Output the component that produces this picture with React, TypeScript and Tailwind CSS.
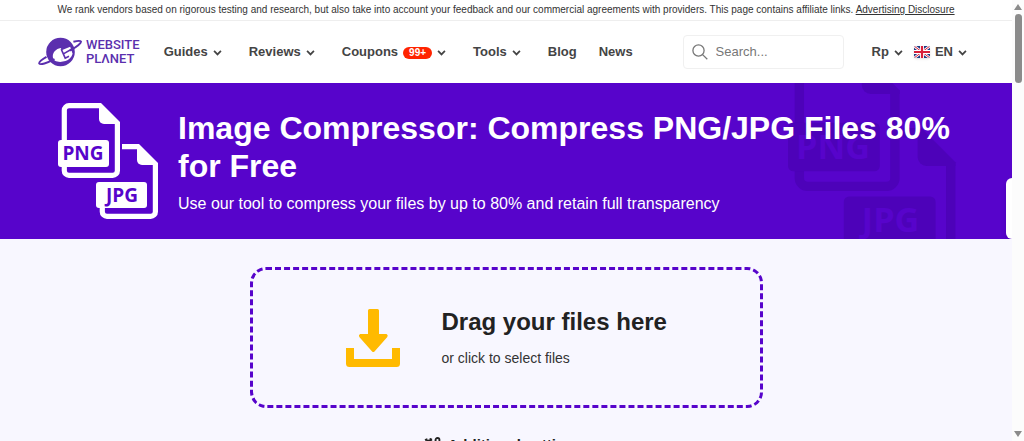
import { ReactNode } from "react";

function Caret() {
  return (
    <svg viewBox="0 0 10 7" className="w-[9px] h-1.5 mt-0.5 shrink-0" fill="none" stroke="currentColor" strokeWidth="2">
      <path d="M1 1 5 5.2 9 1" />
    </svg>
  );
}

function PlanetLogo() {
  return (
    <a href="#" aria-label="Website Planet" className="flex items-center gap-1 text-[#5b2fae] shrink-0">
      <svg viewBox="0 0 44 31" className="w-11 h-8" fill="none">
        <circle cx="22.5" cy="15.5" r="14.3" fill="currentColor" />
        <path d="M14.8 20c0-4.2 3.3-7.6 7.8-8.4l1.6 2 8-3.4 2.4 7c-1 3.4-3.6 6.2-7.2 7.4-5.4 1.7-12.6 1-12.6-4.6z" fill="#fff" />
        <path d="M23.2 12.6 27.2 21.6l3.8-1.9M25.4 17.4l9.4-5.4" stroke="currentColor" strokeWidth="1.6" />
        <path
          d="M8.5 20.3C3.6 23.2.7 25.8 1.3 27c.8 1.5 7.8-.3 15.2-4.3M35.4 5.2c4.1-1 7-1.2 7.5-.2.7 1.5-4.2 5.4-10.9 9.1"
          stroke="currentColor"
          strokeWidth="2"
        />
      </svg>
      <span className="font-[Roboto,sans-serif] text-[13px] leading-[14px] font-medium">
        WEBSITE
        <br />
        PLΛNET
      </span>
    </a>
  );
}

// jpgX / jpgY nudge the front document relative to the back one
function FilesIcon({ className, cut, jpgX = 0, jpgY = 0 }: { className: string; cut: string; jpgX?: number; jpgY?: number }) {
  const label = { fontFamily: "'Open Sans', sans-serif", fontWeight: 700, fontSize: 19 };
  return (
    <svg viewBox="0 0 100 116" className={className} aria-hidden="true">
      <path
        d="M43 2.6H11a4.7 4.7 0 0 0-4.7 4.7v60.4a4.7 4.7 0 0 0 4.7 4.7h43.7a4.7 4.7 0 0 0 4.7-4.7V19"
        fill="none"
        stroke="currentColor"
        strokeWidth="5.2"
      />
      <path d="M41 0h2l19 19v2H46a5 5 0 0 1-5-5z" fill="currentColor" />
      <rect x="0" y="37" width="51" height="27" rx="3" fill="currentColor" />
      <text x="25" y="57" textAnchor="middle" fill={cut} style={label}>PNG</text>
      <g transform={`translate(${jpgX} ${jpgY})`}>
        <path
          d={`M${64 - jpgX} 43.6H81M97.4 60v48.7a4.7 4.7 0 0 1-4.7 4.7H49a4.7 4.7 0 0 1-4.7-4.7v-6`}
          fill="none"
          stroke="currentColor"
          strokeWidth="5.2"
        />
        <path d="M79 41h2l19 19v2H84a5 5 0 0 1-5-5z" fill="currentColor" />
        <rect x="38" y="79" width="51" height="26" rx="3" fill="currentColor" />
        <text x="64" y="99" textAnchor="middle" fill={cut} style={label}>JPG</text>
      </g>
    </svg>
  );
}

function FlagGB() {
  return (
    <svg viewBox="0 0 16 12" className="w-4 h-3 rounded-[2px] shadow">
      <rect width="16" height="12" fill="#1f3a83" />
      <path d="M0 0l16 12M16 0L0 12" stroke="#fff" strokeWidth="2.6" />
      <path d="M0 0l16 12M16 0L0 12" stroke="#d81e3a" strokeWidth="1" />
      <path d="M8 0v12M0 6h16" stroke="#fff" strokeWidth="4" />
      <path d="M8 0v12M0 6h16" stroke="#d81e3a" strokeWidth="2.2" />
    </svg>
  );
}

function MenuButton({ children }: { children: ReactNode }) {
  return (
    <button className="flex items-center gap-[5px] pr-[5px]">
      {children}
      <Caret />
    </button>
  );
}

function Header() {
  return (
    <header className="bg-white text-[#444]">
      <p className="h-[21px] border-b border-[#eee] text-center text-[10px] leading-5 whitespace-nowrap text-[#333]">
        We rank vendors based on rigorous testing and research, but also take into account your feedback and our
        commercial agreements with providers. This page contains affiliate links.{" "}
        <a href="#" className="underline">Advertising Disclosure</a>
      </p>
      <div className="flex items-center h-[62px] pl-[38px] pr-10 text-[13px] font-bold">
        <PlanetLogo />
        <nav className="flex items-center gap-[22px] ml-6">
          <MenuButton>Guides</MenuButton>
          <MenuButton>Reviews</MenuButton>
          <MenuButton>
            Coupons
            <span className="rounded-full bg-[#ff2400] px-1.5 text-[10px] leading-3 text-white mt-0.5">99+</span>
          </MenuButton>
          <MenuButton>Tools</MenuButton>
          <a href="#">Blog</a>
          <a href="#">News</a>
        </nav>
        <label className="flex items-center gap-2 w-[161px] h-[34px] ml-auto px-2 rounded border border-[#f0f0f0]">
          <svg viewBox="0 0 16 16" className="w-4 h-4 shrink-0" fill="none" stroke="#777" strokeWidth="1.3">
            <circle cx="6.5" cy="6.5" r="5.6" />
            <path d="M10.6 10.6 15.3 15.3" />
          </svg>
          <input
            type="search"
            aria-label="Search"
            placeholder="Search..."
            className="w-full min-w-0 font-normal outline-none placeholder:text-[#777]"
          />
        </label>
        <div className="flex items-center gap-1.5 ml-7">
          <MenuButton>Rp</MenuButton>
          <MenuButton>
            <FlagGB />
            <span>EN</span>
          </MenuButton>
        </div>
      </div>
    </header>
  );
}

function Hero() {
  return (
    <section className="relative h-[156px] overflow-hidden bg-[#5704cb] text-white">
      <FilesIcon className="absolute right-11 -top-[27px] w-[180px] h-[209px] text-[#4d02b9]" cut="#5704cb" jpgX={-7} jpgY={-1} />
      <div className="relative flex gap-5 pt-5 pl-[58px] pr-10">
        <FilesIcon className="w-[100px] h-[116px] shrink-0" cut="#5704cb" />
        <div className="pt-1.5">
          <h1 className="text-[32px] leading-[38px] font-bold">
            Image Compressor: Compress PNG/JPG Files 80% for Free
          </h1>
          <p className="mt-[7px] text-[16px] leading-6">
            Use our tool to compress your files by up to 80% and retain full transparency
          </p>
        </div>
      </div>
      <div className="absolute right-0 bottom-0 w-1.5 h-[61px] rounded-l-xl bg-white shadow-md" />
    </section>
  );
}

function DropZone() {
  return (
    <button className="flex items-center w-[513px] h-[141px] pl-[93px] rounded-2xl border-3 border-dashed border-[#5704cb] text-left">
      <svg viewBox="0 0 54 58" className="w-[54px] h-[58px] shrink-0 text-[#ffba00]" fill="currentColor">
        <path d="M22 1.5Q22 0 23.5 0h8Q33 0 33 1.5V25h7.5q2 1 .8 3L28.5 42.5q-1.2 1-2.4 0L13.3 28q-1.2-2 .8-3H22z" />
        <path d="M0 39h8v11h38V39h8v15.5q0 3.5-3.5 3.5h-47Q0 58 0 54.5z" />
      </svg>
      <span className="ml-[42px] text-[#222]">
        <span className="block text-[24px] leading-8 font-bold">Drag your files here</span>
        <span className="block mt-2 text-[14px] leading-6 text-[#333]">or click to select files</span>
      </span>
    </button>
  );
}

function GearsIcon() {
  return (
    <svg viewBox="0 0 20 16" className="w-5 h-4" fill="none" stroke="currentColor">
      <circle cx="7" cy="8" r="4" strokeWidth="3" />
      <circle cx="7" cy="8" r="6" strokeWidth="2" strokeDasharray="2.4 2.3" />
      <circle cx="15.5" cy="3" r="2" strokeWidth="1.8" />
      <circle cx="15.5" cy="12.5" r="2" strokeWidth="1.8" />
    </svg>
  );
}

function ScrollBar() {
  return (
    <div aria-hidden="true" className="flex flex-col items-center w-3 shrink-0 py-1 bg-[#fcfcfc] text-[#8b8b8b]">
      <svg viewBox="0 0 8 6" className="w-2 h-1.5" fill="currentColor">
        <path d="M4 0 8 6H0z" />
      </svg>
      <div className="w-[7px] h-[69px] mt-1 rounded-full bg-current" />
      <svg viewBox="0 0 8 6" className="w-2 h-1.5 mt-auto" fill="currentColor">
        <path d="M0 0h8L4 6z" />
      </svg>
    </div>
  );
}

export default function App() {
  return (
    <div className="flex h-screen overflow-hidden font-['Liberation_Sans',Arial,sans-serif]">
      <div className="flex-1 min-w-0 overflow-hidden bg-[#f8f7ff]">
        <Header />
        <Hero />
        <main className="flex flex-col items-center pt-7">
          <DropZone />
          <h2 className="flex items-center gap-1.5 mt-[25px] pr-2 text-[15px] leading-6 font-bold text-[#222] whitespace-nowrap">
            <GearsIcon />
            Additional settings
          </h2>
        </main>
      </div>
      <ScrollBar />
    </div>
  );
}
